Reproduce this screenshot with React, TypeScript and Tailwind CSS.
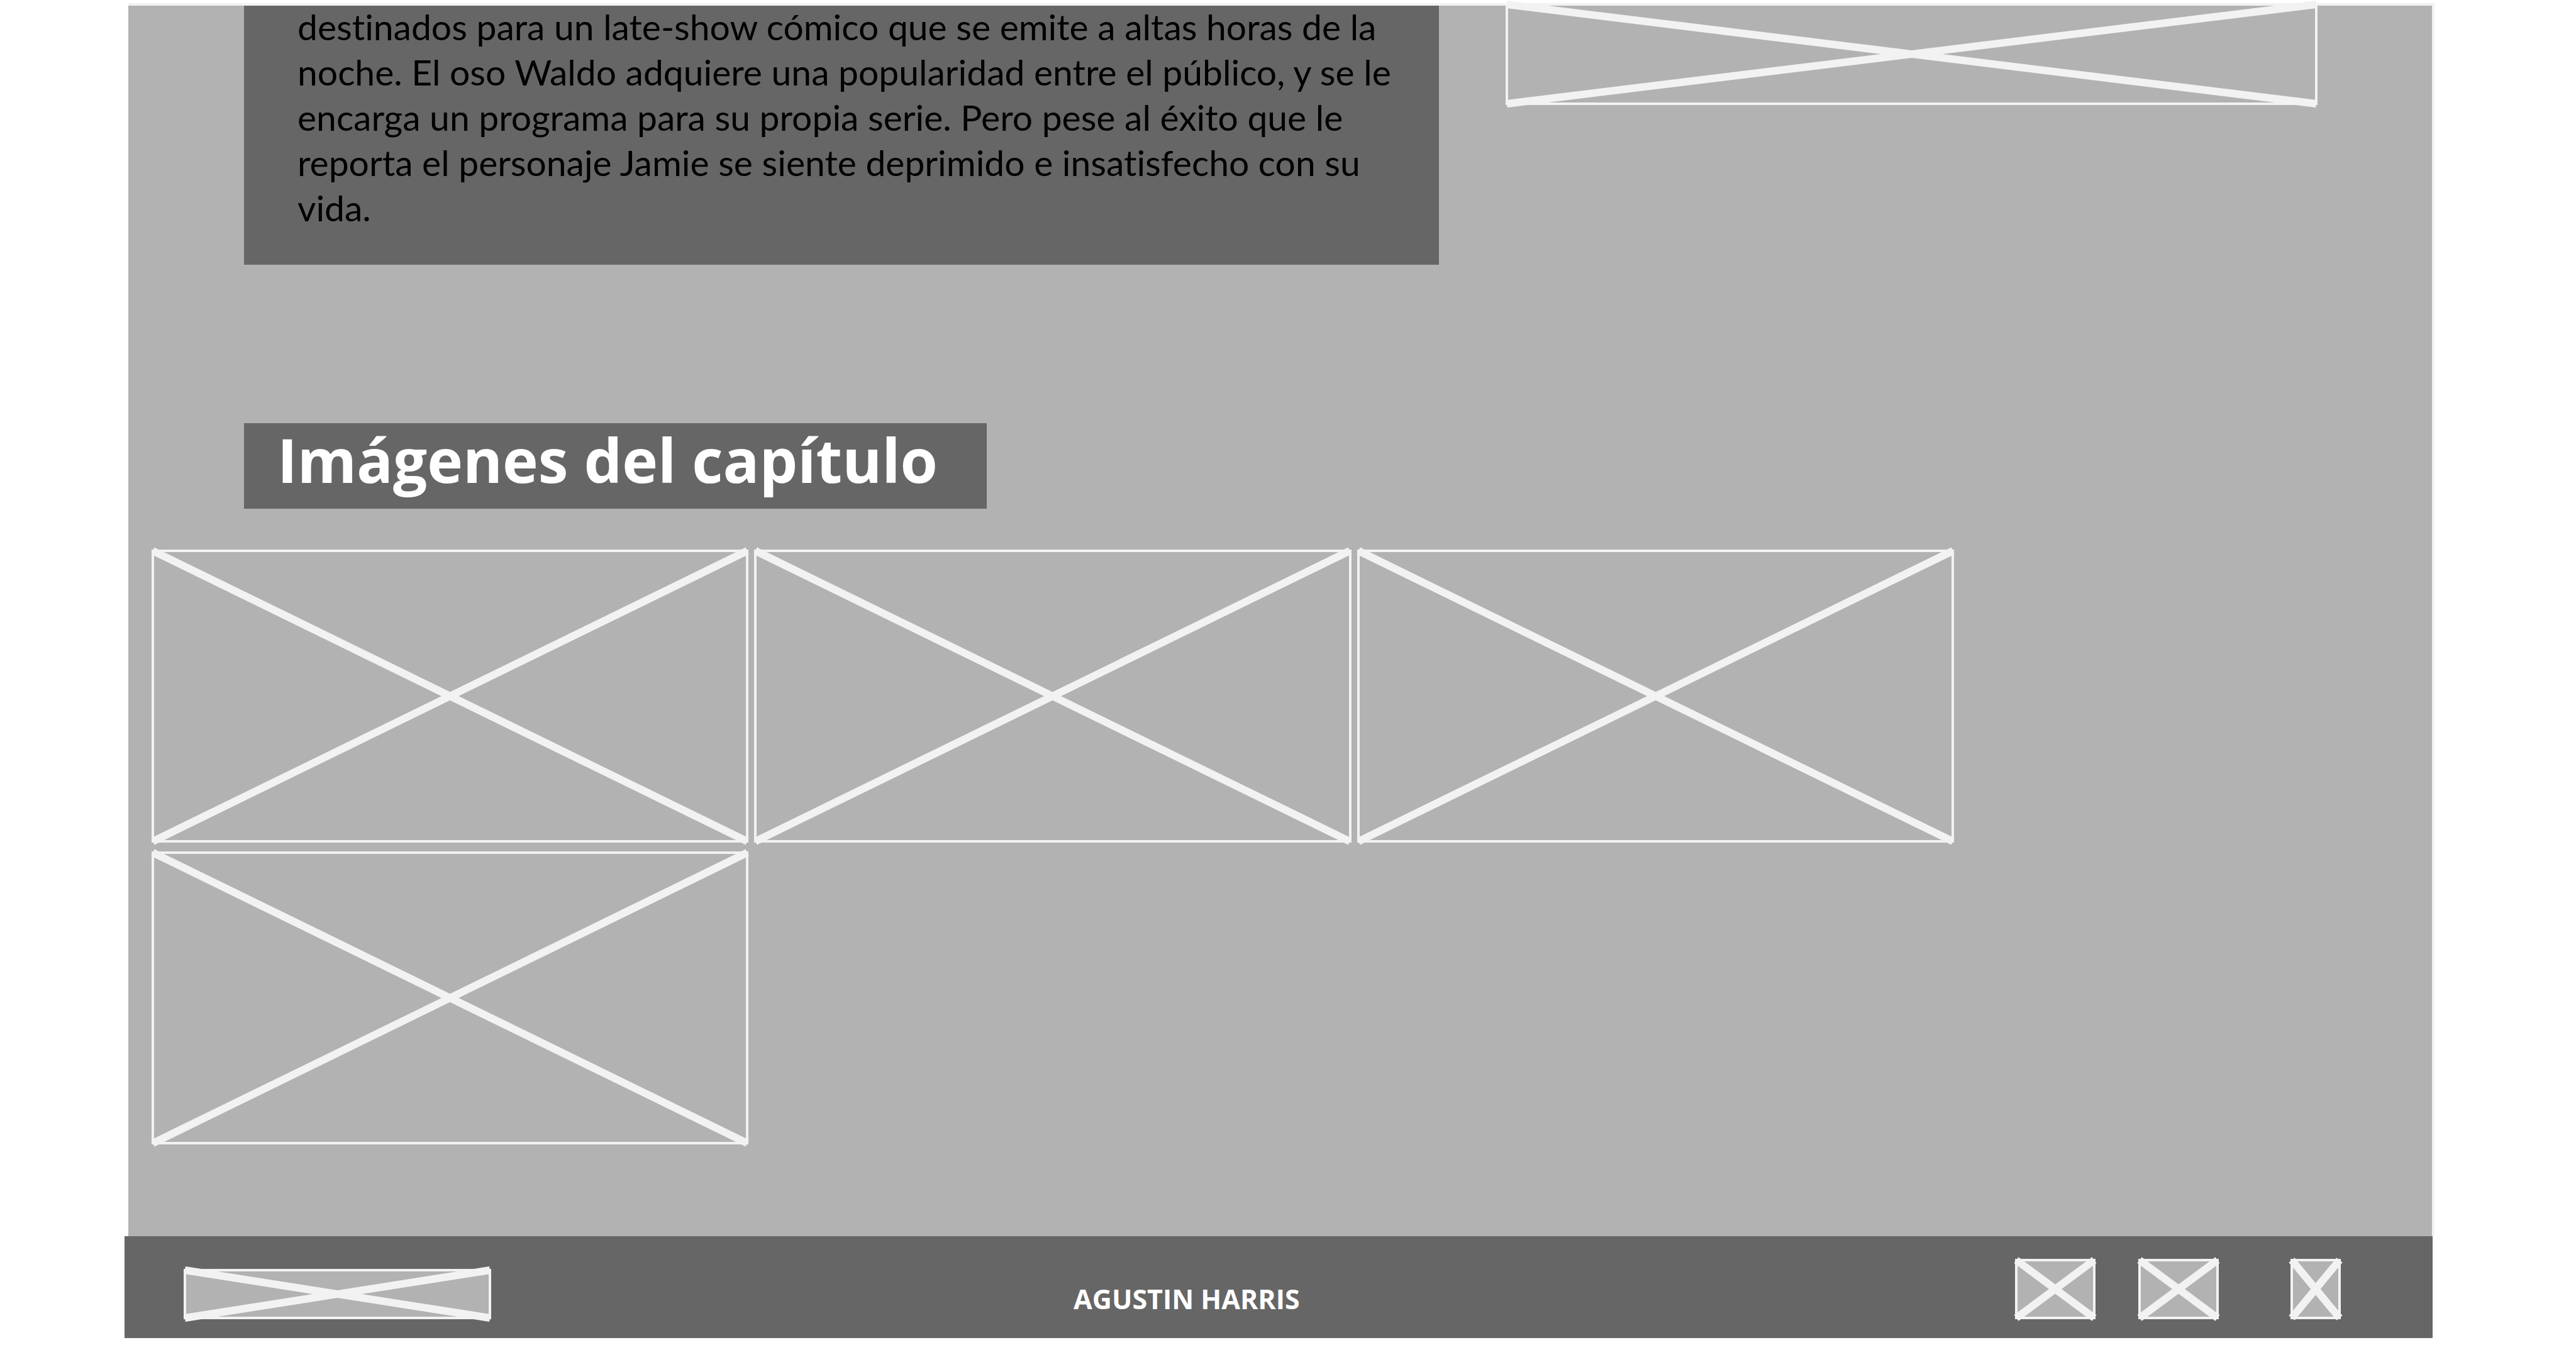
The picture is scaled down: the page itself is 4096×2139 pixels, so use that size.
type FrameProps = {
  label: string;
  className: string;
};

/* Image placeholder: outlined box crossed by its two diagonals. */
function Frame({ label, className }: FrameProps) {
  return (
    <div
      role="img"
      aria-label={label}
      className={`relative border-4 border-[#f2f2f2] bg-[#b2b2b2] ${className}`}
    >
      <svg
        aria-hidden="true"
        className="absolute -top-[2px] -left-[2px] h-[calc(100%+4px)] w-[calc(100%+4px)] overflow-visible"
        stroke="#f2f2f2"
        strokeWidth="12"
      >
        <line x1="0" y1="0" x2="100%" y2="100%" />
        <line x1="0" y1="100%" x2="100%" y2="0" />
      </svg>
    </div>
  );
}

const gallery = ["Imagen 1", "Imagen 2", "Imagen 3", "Imagen 4"];

function Synopsis() {
  return (
    <section className="grid grid-cols-[1900fr_1291fr] items-start gap-[106px] pr-[182px] pl-[184px]">
      <div className="bg-[#666666] pr-[60px] pb-[55px] pl-[85px]">
        <p className="-mt-[3px] font-['Lato',sans-serif] text-[57px] leading-[72px] text-black [font-variant-ligatures:none]">
          destinados para un late-show cómico que se emite a altas horas de la
          noche. El oso Waldo adquiere una popularidad entre el público, y se le
          encarga un programa para su propia serie. Pero pese al éxito que le
          reporta el personaje Jamie se siente deprimido e insatisfecho con su
          vida.
        </p>
      </div>
      <Frame label="Imagen del episodio" className="-mt-1 h-[162px]" />
    </section>
  );
}

function Gallery() {
  return (
    <section className="mt-[252px]">
      <h2 className="ml-[184px] w-fit bg-[#666666] pr-[78px] pb-5 pl-[53px] font-['Open_Sans',sans-serif] text-[96px] leading-[116px] font-bold text-white">
        Imágenes del capítulo
      </h2>
      <div className="mt-[65px] grid grid-cols-[949fr_949fr_949fr_751fr] gap-x-[9px] gap-y-[14px] pl-[37px]">
        {gallery.map((label, i) => (
          <Frame
            key={label}
            label={label}
            className={i === 3 ? "col-start-1 aspect-[949/466]" : "aspect-[949/466]"}
          />
        ))}
      </div>
    </section>
  );
}

function Footer() {
  return (
    <footer className="mr-[3px] flex items-end bg-[#666666] pt-[36px] pr-[146px] pb-[30px] pl-[94px]">
      <Frame label="Logo" className="h-20 w-[489px]" />
      <p className="flex-1 pl-[27%] font-['Open_Sans',sans-serif] text-[43px] leading-[64px] font-bold whitespace-nowrap text-white">
        AGUSTIN HARRIS
      </p>
      <div className="flex items-center">
        <Frame label="Red social 1" className="h-24 w-32" />
        <Frame label="Red social 2" className="ml-[68px] h-24 w-32" />
        <Frame label="Red social 3" className="ml-[114px] h-24 w-20" />
      </div>
    </footer>
  );
}

export default function App() {
  return (
    <div className="min-h-screen bg-white pt-[5px] pr-[225px] pb-[11px] pl-[198px]">
      <main className="ml-[6px] border-t-4 border-r-4 border-[#f2f2f2] bg-[#b2b2b2] pb-[146px]">
        <Synopsis />
        <Gallery />
      </main>
      <Footer />
    </div>
  );
}
